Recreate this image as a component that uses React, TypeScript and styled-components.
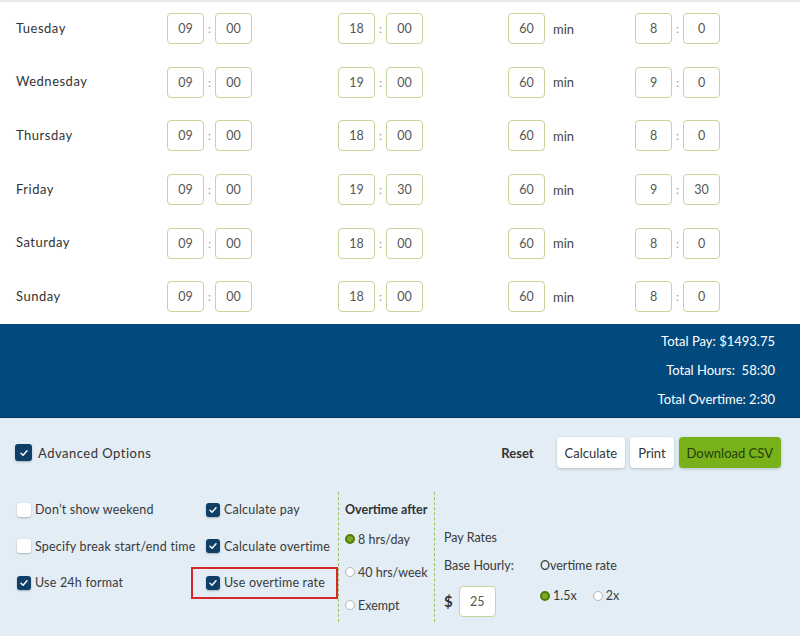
import styled, { createGlobalStyle } from 'styled-components'

const GlobalStyle = createGlobalStyle`
  html, body {
    margin: 0;
    padding: 0;
    background: #fff;
  }
  body {
    font-family: Lato, "Open Sans", "Liberation Sans", sans-serif;
    color: #333;
  }
`

type Day = {
  name: string
  start: [string, string]
  end: [string, string]
  brk: string
  total: [string, string]
}

const days: Day[] = [
  { name: 'Tuesday', start: ['09', '00'], end: ['18', '00'], brk: '60', total: ['8', '0'] },
  { name: 'Wednesday', start: ['09', '00'], end: ['19', '00'], brk: '60', total: ['9', '0'] },
  { name: 'Thursday', start: ['09', '00'], end: ['18', '00'], brk: '60', total: ['8', '0'] },
  { name: 'Friday', start: ['09', '00'], end: ['19', '30'], brk: '60', total: ['9', '30'] },
  { name: 'Saturday', start: ['09', '00'], end: ['18', '00'], brk: '60', total: ['8', '0'] },
  { name: 'Sunday', start: ['09', '00'], end: ['18', '00'], brk: '60', total: ['8', '0'] },
]

const CheckMark = () => (
  <svg width="10" height="10" viewBox="0 0 10 10">
    <path d="M2 5.2 L4.1 7.2 L8 2.8" fill="none" stroke="#fff" strokeWidth="1.4" strokeLinecap="round" strokeLinejoin="round" />
  </svg>
)

const TimePair = ({ value }: { value: [string, string] }) => (
  <Group>
    <Field readOnly value={value[0]} />
    <Colon>:</Colon>
    <Field readOnly value={value[1]} />
  </Group>
)

const Check = ({ checked, big }: { checked?: boolean; big?: boolean }) => (
  <Box $checked={checked} $big={big}>
    {checked && <CheckMark />}
  </Box>
)

const Option = ({ label, checked }: { label: string; checked?: boolean }) => (
  <OptRow>
    <Check checked={checked} />
    <span>{label}</span>
  </OptRow>
)

const Radio = ({ label, on }: { label: string; on?: boolean }) => (
  <RadioLabel>
    <Dot $on={on} />
    {label}
  </RadioLabel>
)

export default function App() {
  return (
    <>
      <GlobalStyle />
      <Page>
        <Schedule>
          {days.map((d) => (
            <DayRow key={d.name}>
              <DayName>{d.name}</DayName>
              <TimePair value={d.start} />
              <TimePair value={d.end} />
              <Group>
                <Field readOnly value={d.brk} />
                <Unit>min</Unit>
              </Group>
              <TimePair value={d.total} />
            </DayRow>
          ))}
        </Schedule>

        <Totals>
          <div>Total Pay: $1493.75</div>
          <div>Total Hours:&nbsp; 58:30</div>
          <div>Total Overtime: 2:30</div>
        </Totals>

        <Panel>
          <TopBar>
            <Advanced>
              <Check checked big />
              <span>Advanced Options</span>
            </Advanced>
            <Actions>
              <ResetLink>Reset</ResetLink>
              <Button>Calculate</Button>
              <Button>Print</Button>
              <Button $primary>Download CSV</Button>
            </Actions>
          </TopBar>

          <Options>
            <OptCol $width={176}>
              <Option label="Don’t show weekend" />
              <Option label="Specify break start/end time" />
              <Option label="Use 24h format" checked />
            </OptCol>
            <OptCol $width={147} $indent={15}>
              <Option label="Calculate pay" checked />
              <Option label="Calculate overtime" checked />
              <OptRow>
                <Highlight>
                  <Check checked />
                  <span>Use overtime rate</span>
                </Highlight>
              </OptRow>
            </OptCol>
            <OvertimeCol>
              <ColTitle>Overtime after</ColTitle>
              <RadioRow>
                <Radio label="8 hrs/day" on />
              </RadioRow>
              <RadioRow>
                <Radio label="40 hrs/week" />
              </RadioRow>
              <RadioRow>
                <Radio label="Exempt" />
              </RadioRow>
            </OvertimeCol>
            <RatesCol>
              <RatesTitle>Pay Rates</RatesTitle>
              <RatesGrid>
                <RateBlock $width={96}>
                  <RateLabel>Base Hourly:</RateLabel>
                  <Amount>
                    <Dollar>$</Dollar>
                    <Field readOnly value="25" />
                  </Amount>
                </RateBlock>
                <RateBlock>
                  <RateLabel>Overtime rate</RateLabel>
                  <Multipliers>
                    <Radio label="1.5x" on />
                    <Radio label="2x" />
                  </Multipliers>
                </RateBlock>
              </RatesGrid>
            </RatesCol>
          </Options>
        </Panel>
      </Page>
    </>
  )
}

const Page = styled.div`
  width: 800px;
  height: 636px;
  overflow: hidden;
  display: flex;
  flex-direction: column;
`

const Schedule = styled.div`
  border-top: 2px solid #e8e8e8;
  padding-left: 16px;
  background: #fff;
`

const DayRow = styled.div`
  display: grid;
  grid-template-columns: 151px 171px 170px 127px auto;
  align-items: center;
  height: 53.6px;
`

const DayName = styled.div`
  font-size: 13px;
  letter-spacing: 0.5px;
  color: #333;
  margin-top: -2px;
`

const Group = styled.div`
  display: flex;
  align-items: center;
`

const Field = styled.input`
  box-sizing: border-box;
  width: 37px;
  height: 31px;
  border: 1px solid #c9d49c;
  border-radius: 4px;
  background: #fff;
  text-align: center;
  font-family: inherit;
  font-size: 12.5px;
  color: #555;
  padding: 0;
  outline: none;
`

const Colon = styled.span`
  width: 11px;
  text-align: center;
  font-size: 12px;
  color: #999;
`

const Unit = styled.span`
  margin-left: 8px;
  font-size: 13px;
  color: #444;
`

const Totals = styled.div`
  background: #024a7e;
  border-bottom: 1px solid #01365d;
  color: #fff;
  text-align: right;
  font-size: 13px;
  line-height: 29px;
  padding: 3px 25px 3px 0;
`

const Panel = styled.div`
  flex: 1;
  background: #e2edf5;
  padding: 20px 19px 0 15px;
`

const TopBar = styled.div`
  display: flex;
  justify-content: space-between;
  align-items: center;
  height: 30px;
`

const Advanced = styled.label`
  display: flex;
  align-items: center;
  gap: 6px;
  font-size: 13px;
  letter-spacing: 0.5px;
  color: #333;
`

const Box = styled.span<{ $checked?: boolean; $big?: boolean }>`
  box-sizing: border-box;
  width: ${(p) => (p.$big ? 17 : 14)}px;
  height: ${(p) => (p.$big ? 17 : 14)}px;
  flex-shrink: 0;
  border-radius: 3px;
  display: inline-flex;
  align-items: center;
  justify-content: center;
  background: ${(p) => (p.$checked ? '#0f3f66' : '#fff')};
  box-shadow: 0 1px 2px rgba(0, 0, 0, 0.25);
`

const Actions = styled.div`
  display: flex;
  align-items: center;
  gap: 5px;
`

const ResetLink = styled.span`
  font-size: 13px;
  font-weight: 700;
  color: #333;
  margin-right: 18px;
`

const Button = styled.button<{ $primary?: boolean }>`
  height: 31px;
  padding: 0 8px;
  border: none;
  border-radius: 4px;
  font-family: inherit;
  font-size: 13px;
  color: ${(p) => (p.$primary ? '#23400c' : '#333')};
  background: ${(p) => (p.$primary ? '#79b11a' : '#fff')};
  box-shadow: 0 1px 3px rgba(0, 0, 0, 0.2);
`

const Options = styled.div`
  display: flex;
  margin-top: 24px;
`

const OptCol = styled.div<{ $width: number; $indent?: number }>`
  width: ${(p) => p.$width}px;
  padding-left: ${(p) => p.$indent ?? 2}px;
  box-sizing: border-box;
  display: flex;
  flex-direction: column;
`

const OptRow = styled.div`
  height: 36.5px;
  display: flex;
  align-items: center;
  gap: 4px;
  font-size: 12.5px;
  letter-spacing: 0.2px;
  color: #3a3a3a;
  white-space: nowrap;
`

const Highlight = styled.div`
  box-sizing: border-box;
  display: flex;
  align-items: center;
  gap: 4px;
  height: 32px;
  width: 147px;
  margin-left: -15px;
  padding-left: 13px;
  border: 2px solid #d8262d;
`

const OvertimeCol = styled.div`
  width: 97px;
  box-sizing: border-box;
  padding: 5px 0 0 6px;
  height: 130px;
  border-left: 1px dashed #9fbf5a;
  border-right: 1px dashed #9fbf5a;
`

const ColTitle = styled.div`
  font-size: 12.5px;
  font-weight: 700;
  line-height: 26px;
  color: #333;
  white-space: nowrap;
`

const RadioRow = styled.div`
  height: 33px;
  display: flex;
  align-items: center;
`

const RadioLabel = styled.label`
  display: inline-flex;
  align-items: center;
  gap: 3px;
  font-size: 12.5px;
  color: #3a3a3a;
  white-space: nowrap;
`

const Dot = styled.span<{ $on?: boolean }>`
  box-sizing: border-box;
  width: 10px;
  height: 10px;
  border-radius: 50%;
  border: ${(p) => (p.$on ? '2px solid #4f7a0e' : '1px solid #b5b5b5')};
  background: ${(p) => (p.$on ? '#7aab1f' : '#fff')};
`

const RatesCol = styled.div`
  padding: 33px 0 0 9px;
`

const RatesTitle = styled.div`
  font-size: 12.5px;
  line-height: 26px;
  color: #3a3a3a;
`

const RatesGrid = styled.div`
  display: flex;
`

const RateBlock = styled.div<{ $width?: number }>`
  width: ${(p) => (p.$width ? `${p.$width}px` : 'auto')};
  display: flex;
  flex-direction: column;
`

const RateLabel = styled.div`
  font-size: 12.5px;
  line-height: 29px;
  color: #3a3a3a;
  white-space: nowrap;
`

const Amount = styled.div`
  display: flex;
  align-items: center;
  gap: 6px;
  margin-top: 6px;
`

const Dollar = styled.span`
  font-size: 15px;
  font-weight: 700;
  color: #333;
`

const Multipliers = styled.div`
  display: flex;
  gap: 16px;
  height: 30px;
  align-items: center;
  margin-top: 1px;
`
